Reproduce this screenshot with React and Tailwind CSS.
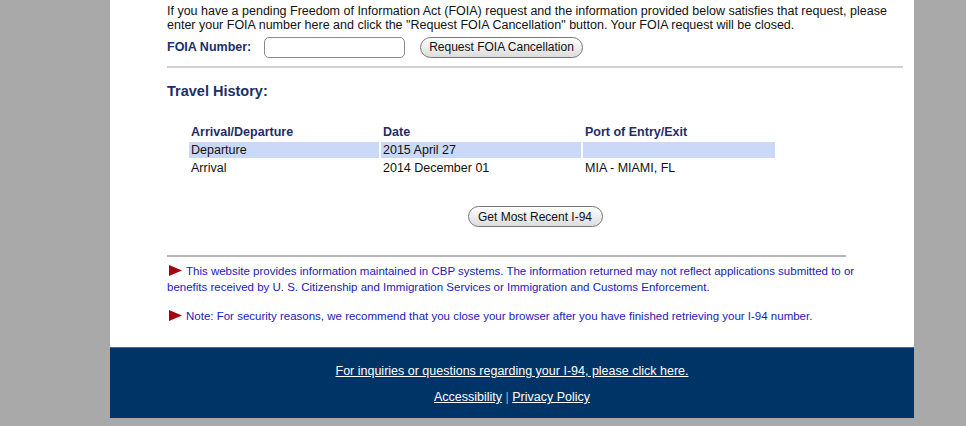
export default function App() {
  const rows = [
    { type: "Departure", date: "2015 April 27", port: "", shaded: true },
    { type: "Arrival", date: "2014 December 01", port: "MIA - MIAMI, FL", shaded: false },
  ];

  const Arrow = () => (
    <svg width="13" height="11" viewBox="0 0 13 11" className="inline-block align-[-1px] mr-[4px] ml-[2px]">
      <polygon points="0,0 13,5.5 0,11" fill="#a80010" />
    </svg>
  );

  return (
    <div className="min-h-[426px] bg-[#a9a9a9] font-['Liberation_Sans',Arial,sans-serif]">
      <div className="ml-[110px] w-[804px] bg-white">
        <div className="pl-[57px] pr-[11px] pt-[4px] pb-[23px]">
          <p className="text-[12.5px] leading-[14px] text-[#111] whitespace-nowrap">
            If you have a pending Freedom of Information Act (FOIA) request and the information provided below satisfies that request, please
            <br />
            enter your FOIA number here and click the "Request FOIA Cancellation" button. Your FOIA request will be closed.
          </p>
          <div className="mt-[5px] flex items-center h-[20px]">
            <span className="w-[97px] text-[12.5px] font-bold text-[#1b2f66]">FOIA Number:</span>
            <input
              type="text"
              className="h-[21px] w-[141px] rounded-[5px] border border-[#8a8a8a] bg-white"
            />
            <button className="ml-[15px] h-[21px] w-[163px] rounded-full border border-[#777] bg-gradient-to-b from-white to-[#dcdcdc] text-[12px] text-[#111]">
              Request FOIA Cancellation
            </button>
          </div>
          <div className="mt-[9px] h-[2px] bg-[#d2d2d2]" />
          <h2 className="mt-[14px] text-[14.5px] font-bold leading-[18px] text-[#1b2f66]">Travel History:</h2>

          <table className="mt-[21px] ml-[20px] table-fixed border-separate border-spacing-[2px] text-[12.5px] leading-[16px]">
            <colgroup>
              <col className="w-[190px]" />
              <col className="w-[200px]" />
              <col className="w-[192px]" />
            </colgroup>
            <thead>
              <tr className="text-left text-[#1b2f66]">
                <th className="h-[17px] p-0 pl-[2px] font-bold">Arrival/Departure</th>
                <th className="p-0 pl-[2px] font-bold">Date</th>
                <th className="p-0 pl-[2px] font-bold">Port of Entry/Exit</th>
              </tr>
            </thead>
            <tbody>
              {rows.map((r) => (
                <tr key={r.type} className={r.shaded ? "bg-[#cad9f7]" : ""}>
                  <td className="h-[16px] p-0 pl-[2px] text-[#111]">{r.type}</td>
                  <td className="p-0 pl-[2px] text-[#111]">{r.date}</td>
                  <td className="p-0 pl-[2px] text-[#111]">{r.port}</td>
                </tr>
              ))}
            </tbody>
          </table>

          <div className="mt-[28px] flex justify-center">
            <button className="h-[21px] w-[135px] rounded-full border border-[#777] bg-gradient-to-b from-white to-[#dcdcdc] text-[12px] text-[#111]">
              Get Most Recent I-94
            </button>
          </div>

          <div className="mt-[28px] mr-[57px] h-[2px] bg-[#b5b5b5]" />

          <p className="mt-[6px] text-[11.5px] leading-[16px] text-[#1a1ab8] whitespace-nowrap">
            <Arrow />
            This website provides information maintained in CBP systems. The information returned may not reflect applications submitted to or
            <br />
            benefits received by U. S. Citizenship and Immigration Services or Immigration and Customs Enforcement.
          </p>
          <p className="mt-[13px] text-[11.5px] leading-[16px] text-[#1a1ab8]">
            <Arrow />
            Note: For security reasons, we recommend that you close your browser after you have finished retrieving your I-94 number.
          </p>
        </div>
        <div className="h-[71px] border-t border-[#4a6a96] bg-[#013466] flex flex-col items-center pt-[15px] text-[12.5px] text-white">
          <a href="#" className="underline leading-[16px]">
            For inquiries or questions regarding your I-94, please click here.
          </a>
          <div className="mt-[10px] leading-[16px]">
            <a href="#" className="underline">Accessibility</a>
            <span className="text-[#aab]"> | </span>
            <a href="#" className="underline">Privacy Policy</a>
          </div>
        </div>
      </div>
    </div>
  );
}
